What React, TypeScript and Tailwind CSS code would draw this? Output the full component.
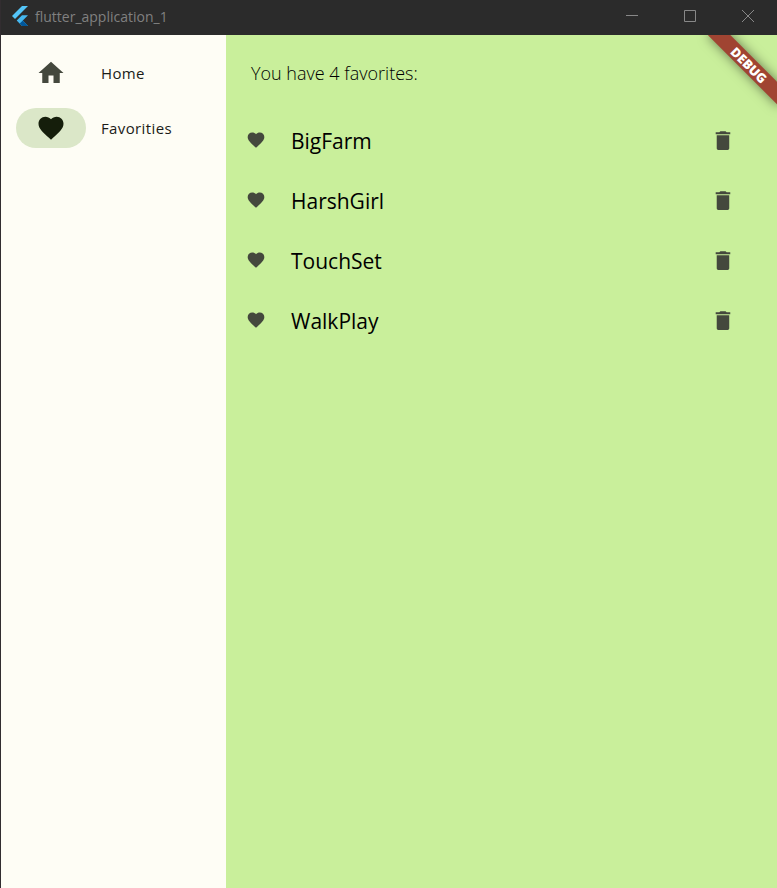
import type { ReactNode } from "react";

const HEART =
  "M12 21.35l-1.45-1.32C5.4 15.36 2 12.28 2 8.5 2 5.42 4.42 3 7.5 3c1.74 0 3.41.81 4.5 2.09C13.09 3.81 14.76 3 16.5 3 19.58 3 22 5.42 22 8.5c0 3.78-3.4 6.86-8.55 11.54L12 21.35z";
const HOME = "M10 20v-6h4v6h5v-8h3L12 3 2 12h3v8z";
const TRASH =
  "M5.500 19.500c0 1 .7 1.500 1.500 1.500h9c.8 0 1.500-.5 1.500-1.500V7H5.500v12.500zM18.500 4h-3.500l-1-1H9L8 4H4.500v2h14V4z";

function Icon({ path, className }: { path: string; className: string }) {
  return (
    <svg viewBox="0 0 24 24" fill="currentColor" aria-hidden="true" className={className}>
      <path d={path} />
    </svg>
  );
}

function FlutterLogo() {
  return (
    <svg viewBox="0 0 16 20" className="h-5 w-4" aria-hidden="true">
      <path d="M10 0h6L3 13 0 10z" fill="#54c5f8" />
      <path d="M10 9.2h6L10.800 14.500 16 20h-6l-5.300-5.500z" fill="#45b8f0" />
      <path d="M7.700 17.500l3.100-3L16 20h-6z" fill="#01579b" />
    </svg>
  );
}

function CaptionButton({ label, children }: { label: string; children: ReactNode }) {
  return (
    <button type="button" aria-label={label} className="flex h-8 w-[58px] items-center justify-center">
      <svg viewBox="0 0 12 12" className="size-3" fill="none" stroke="#888888" aria-hidden="true">
        {children}
      </svg>
    </button>
  );
}

function TitleBar() {
  return (
    <header className="flex h-[35px] items-start bg-[#2b2b2b] pl-[11px]">
      <div className="flex h-8 flex-1 items-center gap-[7px]">
        <FlutterLogo />
        <h1 className="pt-0.5 text-[14px] leading-5 text-[#808080]">flutter_application_1</h1>
      </div>
      <CaptionButton label="Minimize">
        <path d="M0 5.500h12" />
      </CaptionButton>
      <CaptionButton label="Maximize">
        <path d="M.5.500h11v11H.5z" />
      </CaptionButton>
      <CaptionButton label="Close">
        <path d="M0 0l12 12M12 0L0 12" />
      </CaptionButton>
    </header>
  );
}

function NavItem({ label, path, selected }: { label: string; path: string; selected: boolean }) {
  return (
    <a
      href={"#" + label.toLowerCase()}
      aria-current={selected ? "page" : undefined}
      className="flex h-[55px] items-center gap-[15px] pl-[15px]"
    >
      <span
        className={
          selected
            ? "flex h-10 w-[70px] items-center justify-center rounded-full bg-[#dbe7c8] text-[#151e0b]"
            : "flex h-10 w-[70px] items-center justify-center text-[#44483d]"
        }
      >
        <Icon path={path} className="size-[30px]" />
      </span>
      <span className="text-[15px] leading-5 font-medium tracking-wide text-[#1b1c18]">{label}</span>
    </a>
  );
}

function DebugBanner() {
  return (
    <div className="pointer-events-none absolute top-0 right-0 size-24 overflow-hidden">
      <div className="absolute top-[22px] -right-[22px] flex h-4 w-[100px] rotate-45 items-center justify-center bg-[#a04432] text-[13px] leading-4 font-black text-white shadow-[0_0_12px_rgba(0,0,0,0.5)]">
        DEBUG
      </div>
    </div>
  );
}

const favorites = ["BigFarm", "HarshGirl", "TouchSet", "WalkPlay"];

export default function App() {
  return (
    <div className="flex min-h-screen flex-col border-l border-[#322d30] bg-[#c9ef9b] font-['Open_Sans','Noto_Sans',sans-serif]">
      <TitleBar />
      <div className="relative flex flex-1">
        <nav className="w-[225px] shrink-0 bg-[#fefdf5] pt-[10px]">
          <NavItem label="Home" path={HOME} selected={false} />
          <NavItem label="Favorities" path={HEART} selected />
        </nav>
        <main className="min-w-0 flex-1 bg-[#c9ef9b]">
          <p className="px-[25px] pt-6 pb-[23px] text-[18px] leading-7 font-light text-black">
            You have 4 favorites:
          </p>
          <ul>
            {favorites.map((name) => (
              <li key={name} className="flex h-[60px] items-center pr-[41px] pl-5">
                <Icon path={HEART} className="size-5 text-[#44483d]" />
                <span className="flex-1 pt-0.5 pl-[25px] text-[21px] leading-7 text-black">{name}</span>
                <button type="button" aria-label={"Delete " + name} className="text-[#44483d]">
                  <Icon path={TRASH} className="size-[25px]" />
                </button>
              </li>
            ))}
          </ul>
        </main>
        <DebugBanner />
      </div>
    </div>
  );
}
